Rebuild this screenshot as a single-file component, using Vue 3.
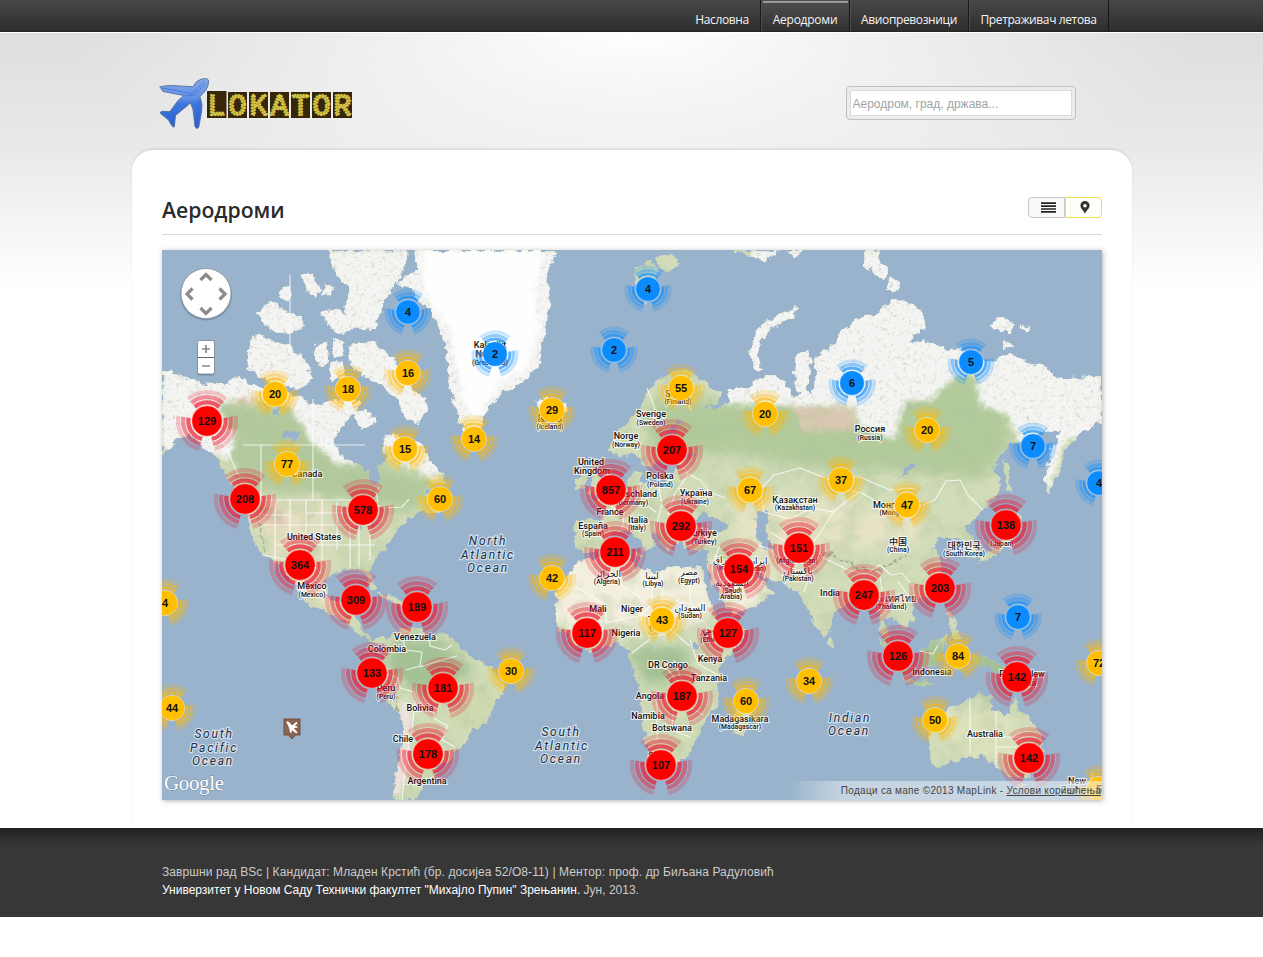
<script setup>
const nav = [
  { text: 'Насловна', cls: 'n1' },
  { text: 'Аеродроми', cls: 'n2 active' },
  { text: 'Авиопревозници', cls: 'n3' },
  { text: 'Претраживач летова', cls: 'n4' },
]
const logo = 'LOKATOR'.split('')

const land = [
  // North America
  'M162 371L180 375 205 384 225 383 240 376 250 384 262 388 285 391 300 399 320 404 345 398 362 402 352 414 340 428 334 443 342 457 356 464 368 470 372 487 379 482 378 466 386 462 382 440 392 433 402 438 414 440 424 446 430 461 442 474 446 484 430 488 424 494 440 498 448 508 438 512 420 512 408 520 397 530 390 543 376 558 370 568 376 586 371 589 364 572 348 569 332 573 325 584 330 601 343 603 348 596 355 599 350 612 356 617 362 630 373 639 385 637 390 643 378 645 362 636 344 621 322 611 305 602 293 584 280 566 270 556 262 554 252 538 248 520 250 505 236 492 226 476 216 459 205 447 190 436 177 437 170 449 162 456Z',
  // Arctic archipelago
  'M328 250L408 250 405 266 396 285 384 300 374 330 352 328 344 305 352 290 336 275Z',
  'M250 338L262 335 275 342 292 346 305 360 313 380 300 388 284 386 262 378 246 368Z',
  'M256 315L268 302 278 303 286 312 301 317 304 328 290 333 272 331Z',
  'M300 275L310 273 321 290 317 297 308 292Z M324 283L334 287 330 298 323 293Z M280 290L290 285 292 297 283 300Z',
  'M315 345L325 340 330 360 322 366 314 358Z M333 340L345 339 342 355 335 358Z M320 314L334 308 348 316 352 330 338 334Z M328 364L340 361 346 377 332 381Z',
  'M347 345L372 342 388 352 402 370 412 388 424 398 428 410 416 424 404 415 398 400 384 386 366 378 352 367Z M353 412L366 410 376 423 362 430Z',
  // Greenland
  'M418 250L558 250 551 265 546 282 550 303 544 340 538 368 520 384 503 392 490 406 483 418 480 434 466 434 459 420 453 398 449 372 446 345 436 318 430 308 417 300 412 288 398 284 406 276 417 272Z',
  'M537 402L548 398 566 402 568 411 553 418 540 414Z M414 250L430 250 426 258 416 262Z',
  // South America
  'M385 640L400 630 418 628 432 635 448 633 458 647 476 660 493 668 500 678 506 686 498 700 492 710 488 722 472 730 466 744 453 754 448 764 438 764 436 776 423 784 417 800 393 800 396 775 401 750 405 733 401 714 388 703 378 690 370 677 374 664 384 655Z',
  'M377 592L393 596 404 603 399 605 384 598Z M406 602L420 604 419 609 406 608Z',
  // British Isles
  'M589 463L598 460 598 474 606 486 602 495 587 494 593 480Z M576 478L586 474 586 488 576 490Z',
  // Eurasia
  'M610 444L618 430 628 423 640 406 650 388 661 377 674 371 687 370 704 380 720 393 719 403 705 406 713 412 728 401 730 388 748 388 757 380 770 374 782 379 793 398 800 395 794 375 796 354 808 350 811 365 807 388 812 396 816 376 814 358 824 350 834 343 847 325 865 315 878 314 892 298 904 302 922 308 926 325 907 343 928 341 948 351 960 346 980 360 993 362 1007 354 1027 362 1045 367 1057 379 1078 377 1102 376 1102 422 1084 430 1068 446 1063 462 1048 494 1045 474 1055 440 1062 430 1043 432 1024 438 1010 444 992 468 1001 480 998 492 985 508 976 519 966 528 975 543 977 557 968 559 961 540 949 538 938 537 934 548 942 562 940 577 926 596 912 602 914 620 903 628 893 617 884 620 889 640 895 651 888 650 880 630 878 605 867 603 850 602 836 611 831 628 823 638 812 620 800 594 784 583 768 580 749 566 743 560 757 577 773 592 756 606 733 615 721 596 707 570 708 551 685 550 682 539 667 550 657 535 650 532 655 545 646 552 640 540 625 531 611 532 600 550 585 553 574 548 575 520 601 520 603 507 593 500 614 494 627 486 633 472 642 472 638 483 658 483 674 476 678 461 696 455 680 449 673 437 682 420 668 429 661 442 660 461 650 468 641 461 632 453 618 456 610 451Z',
  'M1002 458L1010 471 1011 492 1007 488Z M1008 513L1022 516 1010 524Z M1010 528L1009 543 996 556 980 562 982 555 998 546Z',
  'M636 553L645 554 641 558Z M616 543L621 542 621 552 616 551Z M943 588L947 590 944 598Z M828 636L834 640 833 647 828 645Z',
  // Africa
  'M580 560L603 556 630 558 636 567 658 574 670 565 686 568 702 567 707 592 716 617 728 630 748 627 742 642 722 664 717 686 720 705 704 721 698 739 688 755 673 766 655 768 647 746 640 715 643 695 631 667 629 652 617 643 590 651 574 645 556 624 557 588Z',
  'M749 698L754 708 744 734 734 735 731 723 737 710Z',
  // South-east Asia and Australia
  'M878 638L891 649 907 670 904 677 891 662Z M903 677L920 680 934 684 925 687 905 682Z M920 651L935 641 947 634 945 650 936 668 922 664Z M952 655L964 651 958 660 963 672 956 671Z M946 609L951 612 958 630 962 640 952 638 950 622Z',
  'M974 656L992 660 1014 669 1032 690 1018 689 998 679 990 668 976 663Z M1032 675L1042 672 1040 679Z',
  'M927 737L930 726 943 717 950 707 963 703 977 693 990 697 992 710 1010 715 1015 692 1020 710 1030 718 1040 733 1044 750 1030 776 1010 778 997 768 986 758 970 755 953 762 937 768 931 760Z M1016 784L1025 784 1020 791Z M1092 772L1099 786 1093 797 1087 789Z',
  // Arctic islands of Europe and Asia
  'M635 266L652 260 658 272 650 286 646 303 638 293Z M654 257L673 255 680 264 668 274 660 268Z M735 250L780 250 766 261 748 256Z M787 250L802 250 795 259Z',
  'M798 308L786 311 768 320 756 333 750 350 753 368 762 371 758 353 762 338 774 326 794 317Z M776 389L784 390 781 401Z',
  'M865 250L881 250 880 262 890 269 885 281 866 267Z M890 277L901 284 895 292 886 290Z M993 321L1003 317 1015 324 1009 331 994 331Z M1020 325L1031 328 1026 333Z M1004 342L1012 346 1004 348Z',
].join(' ')

const snow = 'M162 250H580V436L464 440 435 480 400 462 385 450 350 465 335 463 310 440 290 406 250 397 215 403 235 435 230 460 210 453 162 450ZM630 250H810V306L784 318 770 378 780 402 720 400 720 388H740L750 250ZM790 250H1102V445L1066 438 1048 494 1020 442 1008 415 980 405 975 368 945 385 928 402 905 400 895 440 858 425 855 406 720 404Z'
const borders = [
  'M214 393V435L225 445 238 475', 'M249 500H352', 'M243 445H365', 'M313 399V500', 'M261 445V500', 'M290 275V350', 'M275 502V570M290 500V560M306 500V572M322 500V560M337 502V550M350 512V568M262 525H370M277 545H375M306 513H350M359 514V567M370 520V560M262 515H290',
  'M352 500L360 507 374 503 382 508 402 507 409 499', 'M262 555L283 559 310 562 322 574', 'M378 502L376 493 379 487',
  'M402 638L406 650 422 652 420 666 406 670M420 667L438 661 457 656M378 671L398 678 400 688 414 692 417 701 432 706 435 719 448 726 442 740 455 747M415 700L412 730 406 760 402 800M429 635L430 646 445 650 452 645',
  'M647 388L654 406 657 428M684 377L681 391 691 410M678 461L688 474 700 480 710 492 725 498M611 506L624 515 622 530M640 482L642 502 656 512M658 483L662 505 655 530M688 475L675 493 668 515',
  'M760 490L774 475 800 468 830 480 840 488 862 493M760 490L764 512 790 519 812 508 833 512 857 493M862 493L882 505 907 511 935 500 946 481 960 480 968 495 983 510M830 480L860 477 890 490 916 488M833 512L824 527 812 544 822 557 848 570 866 574 880 565 891 575 902 573 913 586M770 532L790 544 800 534M784 583L781 561 790 544M820 557L810 575 804 592M730 548L740 562M757 545L770 549 782 562M720 545L714 561M880 577L883 597 892 600M898 582L909 596',
  'M567 640L576 628 590 625 590 607M557 588H578L606 605V623L618 620 637 616M618 558L622 586 641 598M652 572V604L640 616M662 574V598L690 604M690 568V602L703 622M641 617L649 637 671 633M671 605V630L690 646M650 639L632 653M690 640L698 664 718 675M651 664L668 670 684 688 688 703M642 697L674 699 672 730 690 737M657 699V740M684 704L704 715M674 660L681 679M592 630V647M603 625V648',
  'M970 697V754M996 711V768M970 737H1036M997 747H1034M920 651L933 654 938 645',
]

// kind: r = large, y = medium, b = small
const clusters = `408,312,4,b 495,354,2,b 648,289,4,b 614,350,2,b 852,383,6,b 971,362,5,b 1033,446,7,b 1099,483,4,b 1018,617,7,b
275,394,20,y 348,389,18,y 408,373,16,y 405,449,15,y 474,439,14,y 552,410,29,y 681,388,55,y 765,414,20,y 927,430,20,y 287,464,77,y 440,499,60,y 750,490,67,y 841,480,37,y 907,505,47,y 552,578,42,y 662,620,43,y 511,671,30,y 809,681,34,y 958,656,84,y 935,720,50,y 746,701,60,y 165,603,4,y 172,708,44,y 1099,663,72,y 1099,789,5,y
207,421,129,r 245,499,208,r 363,510,578,r 300,565,364,r 356,600,309,r 417,607,189,r 372,673,133,r 443,688,181,r 428,754,178,r 672,450,207,r 611,490,857,r 681,526,292,r 615,552,211,r 739,569,154,r 799,548,151,r 587,633,117,r 728,633,127,r 682,696,187,r 661,765,107,r 864,595,247,r 940,588,203,r 898,656,126,r 1017,677,142,r 1029,758,142,r 1006,525,138,r`
  .split(/\s+/).map(s => { const [x, y, n, k] = s.split(','); return { x: +x, y: +y, n, k } })

const spec = {
  r: { c: '#ff0000', ring: '#ee1028', r: 15.2, w: 4.2, rs: [18.7, 23.9, 29] },
  y: { c: '#ffbf00', ring: '#ffb800', r: 12.7, w: 3, rs: [15.2, 18.9, 22.4] },
  b: { c: '#0a8cff', ring: '#0a8cff', r: 12.3, w: 3, rs: [15, 18.6, 22] },
}
const pt = (r, d) => `${(r * Math.cos(d * Math.PI / 180)).toFixed(2)} ${(r * Math.sin(d * Math.PI / 180)).toFixed(2)}`
const arc = (r, a, b) => `M${pt(r, a)}A${r} ${r} 0 0 1 ${pt(r, b)}`
const rings = r => arc(r, -131, -49) + arc(r, -10, 75) + arc(r, 105, 190)

const labels = [
  ['Kalaallit', 490, 348], ['Nunaat', 490, 357], ['(Greenland)', 490, 365, 1],
  ['Canada', 307, 477], ['United States', 314, 540], ['México', 312, 589], ['(Mexico)', 312, 597, 1],
  ['Venezuela', 415, 640], ['Colombia', 387, 652], ['Perú', 386, 691], ['(Peru)', 386, 699, 1], ['Bolivia', 420, 711], ['Chile', 403, 742], ['Argentina', 427, 784],
  ['Ísland', 550, 422], ['(Iceland)', 550, 429, 1], ['Suomi', 678, 397], ['(Finland)', 678, 404, 1], ['Sverige', 651, 417], ['(Sweden)', 651, 425, 1], ['Norge', 626, 439], ['(Norway)', 626, 447, 1],
  ['United', 591, 465], ['Kingdom', 592, 474], ['Polska', 660, 479], ['(Poland)', 660, 487, 1], ['Deutschland', 632, 497], ['(Germany)', 632, 505, 1], ['Україна', 696, 496], ['(Ukraine)', 695, 504, 1], ['France', 610, 515], ['España', 593, 529], ['(Spain)', 593, 536, 1], ['Italia', 638, 523], ['(Italy)', 637, 530, 1], ['Türkiye', 702, 536], ['(Turkey)', 704, 544, 1],
  ['Россия', 870, 432], ['(Russia)', 870, 440, 1], ['Қазақстан', 795, 503], ['(Kazakhstan)', 795, 510, 1], ['Монгол', 889, 508], ['(Mongolia)', 896, 515, 1], ['中国', 898, 545], ['(China)', 898, 552, 1], ['대한민국', 964, 549], ['(South Korea)', 964, 556, 1], ['(Japan)', 1002, 546, 1], ['India', 830, 596], ['ประเทศไทย', 892, 602], ['(Thailand)', 891, 609, 1], ['(Afghanistan)', 797, 563, 1], ['پاکستان', 798, 574], ['(Pakistan)', 798, 581, 1], ['Indonesia', 932, 675], ['Papua New', 1022, 677], ['Guinea', 1022, 686], ['Australia', 985, 737], ['New', 1077, 784], ['Zealand', 1077, 793],
  ['الجزائر', 608, 577], ['(Algeria)', 607, 584, 1], ['ليبيا', 652, 579], ['(Libya)', 653, 586, 1], ['مصر', 689, 575], ['(Egypt)', 689, 583, 1], ['ایران', 758, 564], ['(Iran)', 758, 571, 1], ['العراق', 725, 563], ['(Iraq)', 725, 570, 1], ['السعودية', 732, 586], ['(Saudi', 732, 593, 1], ['Arabia)', 731, 599, 1],
  ['Mali', 598, 612], ['Niger', 632, 612], ['Tchad', 660, 623], ['(Chad)', 660, 630, 1], ['السودان', 690, 611], ['(Sudan)', 690, 618, 1], ['Nigeria', 626, 636], ['ኢትዮጵያ', 715, 635], ['(Ethiopia)', 715, 642, 1], ['Kenya', 710, 662], ['DR Congo', 668, 668], ['Tanzania', 709, 681], ['Angola', 650, 699], ['Namibia', 648, 719], ['Botswana', 672, 731], ['South', 660, 759], ['Madagasikara', 740, 722], ['(Madagascar)', 740, 729, 1],
]
const oceans = [
  ['North', 488, 545], ['Atlantic', 488, 559], ['Ocean', 488, 572],
  ['South', 561, 736], ['Atlantic', 562, 750], ['Ocean', 561, 763],
  ['South', 214, 738], ['Pacific', 214, 752], ['Ocean', 213, 765],
  ['Indian', 850, 722], ['Ocean', 849, 735],
]
</script>

<template>
  <div class="page">
    <header class="topbar">
      <nav class="nav">
        <a v-for="n in nav" :key="n.text" :class="n.cls"><span>{{ n.text }}</span></a>
      </nav>
    </header>

    <div class="backdrop">
      <div class="head">
        <svg class="logo" width="194" height="53" viewBox="0 0 194 53">
          <defs>
            <linearGradient id="pg" x1="0" y1="0" x2="0" y2="1"><stop offset="0" stop-color="#86a9ea" /><stop offset=".4" stop-color="#5f8fe3" /><stop offset=".5" stop-color="#3f76dc" /><stop offset="1" stop-color="#2a5fd2" /></linearGradient>
          </defs>
          <path d="M.8 8.700Q10 6.500 21 8L34 8.700Q37 2.500 42 1.200 48 -.2 49.500 2 50 7 47 12L41 18.700Q44 26 42.700 33L39.800 49Q38 52 36 48.700L34 31.500 31.500 25 16.500 37.500 15.300 49Q13.500 50 9.500 42L1.500 35.500Q1 33.500 3 33.300L11 33.500 19 22.500 25 17.500 4 13.500Z" fill="url(#pg)" stroke="#58719f" stroke-width=".9" />
          <path d="M3 10L33 15.500 46 3M26 18L35 17 46 6M40 20Q41 34 37 48M13 34L15 45" fill="none" stroke="#2d63cf" stroke-width="1" opacity=".55" />
          <g v-for="(l, i) in logo" :key="i">
            <rect :x="i ? 48 + 21 * i : 48" :y="i ? 14 : 13" :width="i ? 19 : 19.500" :height="i ? 26 : 27" fill="#38260b" />
            <text class="led" :x="57.500 + 21 * i" y="37">{{ l }}</text>
          </g>
        </svg>
        <div class="search"><input type="text" placeholder="Аеродром, град, држава..." /></div>
      </div>

      <main class="card">
        <div class="titlebar">
          <h1>Аеродроми</h1>
          <div class="toggle">
            <button class="list"><svg width="15" height="11" viewBox="0 0 15 11"><path d="M0 1.200H15M0 4.100H15M0 7H15M0 9.800H15" stroke="#222" stroke-width="1.700" /></svg></button>
            <button class="pin"><svg width="10" height="13" viewBox="0 0 10 13"><path fill-rule="evenodd" d="M5 0A4.600 4.600 0 0 0 .4 4.600C.4 7.500 3.400 9.300 5 12.800 6.600 9.300 9.600 7.500 9.600 4.600A4.600 4.600 0 0 0 5 0ZM5 2.900A1.800 1.800 0 1 1 5 6.500 1.800 1.800 0 0 1 5 2.900Z" fill="#333" /></svg></button>
          </div>
        </div>

        <div class="map">
          <svg width="940" height="550" viewBox="162 250 940 550">
            <defs>
              <clipPath id="landclip"><path :d="land" /></clipPath>
              <filter id="rough" filterUnits="userSpaceOnUse" x="150" y="240" width="970" height="570">
                <feTurbulence type="fractalNoise" baseFrequency=".13" numOctaves="3" seed="4" result="n" />
                <feDisplacementMap in="SourceGraphic" in2="n" scale="9" xChannelSelector="R" yChannelSelector="G" />
              </filter>
              <filter id="relief" filterUnits="userSpaceOnUse" x="150" y="240" width="970" height="570">
                <feTurbulence type="fractalNoise" baseFrequency=".05" numOctaves="4" seed="9" />
                <feColorMatrix values="0 0 0 0 .42  0 0 0 0 .56  0 0 0 0 .33  2.6 0 0 0 -1.15" />
              </filter>
              <filter id="speck" filterUnits="userSpaceOnUse" x="150" y="240" width="970" height="570">
                <feTurbulence type="fractalNoise" baseFrequency=".3" numOctaves="2" seed="3" />
                <feColorMatrix values="0 0 0 0 .5  0 0 0 0 .5  0 0 0 0 .45  0 4 0 0 -2.2" />
              </filter>
              <filter id="soft"><feGaussianBlur stdDeviation="6" /></filter>
              <filter id="soft2"><feGaussianBlur stdDeviation="2.5" /></filter>
              <linearGradient id="fade"><stop offset="0" stop-color="#fff" stop-opacity="0" /><stop offset=".17" stop-color="#f3f5f7" stop-opacity=".5" /><stop offset="1" stop-color="#f3f5f7" stop-opacity=".55" /></linearGradient>
              <clipPath id="snowclip"><path :d="snow" /></clipPath>
            </defs>

            <rect x="162" y="250" width="940" height="550" fill="#99b3cc" />
            <g filter="url(#rough)">
              <g clip-path="url(#landclip)">
                <rect x="150" y="240" width="970" height="570" fill="#d2dcb9" />
                <g filter="url(#soft)">
                  <path d="M200 400L310 410 345 460 440 480 410 515 330 495 250 490 225 455Z" fill="#b3c99d" />
                  <path d="M650 400L760 400 900 400 930 375 975 375 1010 410 1010 445 980 480 900 470 830 470 740 455 650 455Z" fill="#b3ca9b" />
                  <path d="M250 505L330 500 320 575 345 615 300 605Z" fill="#e4dfbf" />
                  <path d="M550 555L700 560 720 620 660 632 550 630ZM700 560L780 585 735 620Z" fill="#f3eedd" />
                  <path d="M730 490L830 500 930 515 915 545 835 550 770 580 735 550Z" fill="#e5e3c4" />
                  <path d="M930 710L1010 710 1025 755 960 760Z" fill="#dde2bd" />
                  <path d="M390 640L440 640 475 670 450 695 410 690 385 665ZM630 647L690 647 685 680 645 685ZM885 630L1040 660 1020 700 880 680Z" fill="#a3c195" />
                  <path d="M450 675L500 690 480 725 450 730Z" fill="#cfd9af" />
                </g>
                <g filter="url(#soft2)">
                  <path d="M225 385L250 385 262 397 242 406 227 399Z M260 510L280 505 288 528 268 525Z" fill="#dfc8ae" />
                  <path d="M790 404L855 407 855 430 805 431ZM1017 382L1070 385 1080 394 1055 403 1015 395ZM1040 425L1060 418 1065 428Z" fill="#dcc8b2" />
                </g>
                <rect x="150" y="240" width="970" height="570" filter="url(#relief)" opacity=".45" />
                <path :d="snow" fill="#f4f5f2" filter="url(#soft2)" />
                <g clip-path="url(#snowclip)"><rect x="150" y="240" width="970" height="570" filter="url(#speck)" opacity=".42" /></g>
                <path d="M422 250H543L535 300 540 330 525 370 500 383 475 420 463 400 450 330 425 295Z" fill="#fefefe" filter="url(#soft2)" />
                <path d="M400 700L412 703 408 770 398 800 390 780Z" fill="#eee1dc" filter="url(#soft2)" />
                <path d="M800 560L830 553 870 573 910 555M235 475L255 510 265 550M380 670L395 695 405 740" fill="none" stroke="#86906f" stroke-width="2" stroke-dasharray="4 2" opacity=".6" />
              </g>
              <path d="M692 522L704 512 713 518 728 524 727 531 706 531ZM755 514L767 510 768 522 764 529 772 548 765 550 758 537ZM350 518L362 516 370 520 363 521 360 531 356 522ZM370 526L380 522 372 528ZM283 431L300 432 295 440 283 438ZM270 410L282 408 279 416ZM692 641L699 645 694 650ZM899 480L913 468 915 462 909 463ZM668 426L683 420 680 425 670 434Z" fill="#99b3cc" />
            </g>
            <path v-for="(b, i) in borders" :key="'b' + i" :d="b" fill="none" stroke="#fff" stroke-width="1.15" stroke-linejoin="round" opacity=".76" />

            <g class="lbl">
              <text v-for="(l, i) in labels" :key="'l' + i" :x="l[1]" :y="l[2]" :class="{ sub: l[3] }">{{ l[0] }}</text>
            </g>
            <g class="ocean">
              <text v-for="(o, i) in oceans" :key="'o' + i" :x="o[1]" :y="o[2]">{{ o[0] }}</text>
            </g>

            <g v-for="(c, i) in clusters" :key="'c' + i" :transform="`translate(${c.x} ${c.y})`">
              <path v-for="(r, j) in spec[c.k].rs" :key="j" :d="rings(r)" fill="none" :stroke="spec[c.k].ring" :stroke-width="spec[c.k].w" :opacity="[0.68, 0.45, 0.22][j]" />
              <circle :r="spec[c.k].r" :fill="spec[c.k].c" stroke="#fff" stroke-opacity=".4" stroke-width="1" />
              <text class="num" y="4">{{ c.n }}</text>
            </g>

            <g>
              <path d="M284 719H300V735H295.500L292 739 288.500 735H284Z" fill="#8a6552" stroke="#705041" />
              <path d="M286.500 721.500L289 722 292 725.500 296.500 726 298 727.500 293.800 728 297.500 732.500 296.300 733.500 291.800 730 291.500 733 290 732.500 289.300 728.500Z" fill="#fff" />
              <path d="M287 722L292 727 297 722.500" fill="none" stroke="#fff" stroke-width="1.800" />
            </g>

            <g class="ctl">
              <circle cx="206" cy="294.500" r="26" fill="#456" opacity=".35" />
              <circle cx="206" cy="293.500" r="25" fill="#fff" stroke="#858f99" stroke-width=".7" />
              <path d="M200.500 280L206 274.500 211.500 280M200.500 308L206 313.500 211.500 308M192.500 288.500L187 294 192.500 299.500M219.500 288.500L225 294 219.500 299.500" fill="none" stroke="#8b8b8b" stroke-width="3.200" />
              <rect x="197.500" y="341.500" width="17" height="34" rx="2" fill="#456" opacity=".4" />
              <rect x="197.500" y="340.500" width="17" height="33.500" rx="2" fill="#fff" stroke="#77838f" stroke-width=".8" />
              <path d="M198 357.500H214" stroke="#5b6570" />
              <path d="M202 349H210M206 345V353M202 366H210" stroke="#888" stroke-width="1.700" />
            </g>
            <rect x="790" y="781" width="312" height="19" fill="url(#fade)" />
            <text class="google" x="164" y="790" textLength="60">Google</text>
          </svg>
          <div class="copy">Подаци са мапе ©2013 MapLink - <u>Услови коришћења</u></div>
        </div>
      </main>
    </div>

    <footer>
      <p class="f1">Завршни рад BSc | Кандидат: Младен Крстић (бр. досијеа 52/О8-11) | Ментор: проф. др Биљана Радуловић</p>
      <p class="f2"><strong>Универзитет у Новом Саду Технички факултет "Михајло Пупин" Зрењанин.</strong> Јун, 2013.</p>
    </footer>
  </div>
</template>

<style>
body { margin: 0; background: #fff; }
</style>

<style scoped>
.page { width: 1263px; height: 957px; overflow: hidden; background: #fff; font-family: "Liberation Sans", Arial, sans-serif; }
.topbar { height: 32px; background: linear-gradient(#484848, #2d2d2d); box-sizing: border-box; border-bottom: 1px solid #242424; }
.nav { display: flex; margin-left: 683px; height: 31px; width: 426px; border-right: 1px solid #171717; box-sizing: border-box; }
.nav a { box-sizing: border-box; display: flex; justify-content: center; padding-top: 11px; color: #f4f4f4; font: 500 12px/18px "Open Sans", "Noto Sans", sans-serif; white-space: nowrap; border-left: 1px solid #171717; box-shadow: inset 1px 0 #515151; letter-spacing: -.38px; }
.nav .n1 { width: 77px; border-left-color: transparent; box-shadow: none; }
.nav .n2 { width: 89px; letter-spacing: -.25px; }
.nav .n3 { width: 119px; }
.nav .n4 { width: 140px; }
.nav .active { background: linear-gradient(#aaa, #8a8a8a) 2px 1px / 85px 2px no-repeat, linear-gradient(#505050, #303030); }
.backdrop { height: 796px; background: linear-gradient(rgba(255,255,255,0), rgba(255,255,255,.35) 118px, #fff 255px), radial-gradient(ellipse 560px 190px at 632px 0, #fff 0, #f1f1f1 40%, #dedede 100%); border-top: 1px solid #fff; box-sizing: border-box; }
.head { height: 117px; margin: 0 auto; width: 1000px; display: flex; justify-content: space-between; box-sizing: border-box; padding: 45px 56px 0 27px; }
.logo { display: block; }
.led { font: 30px "Liberation Mono", monospace; text-anchor: middle; fill: #b9a42b; stroke: #d6c74b; stroke-width: 2.3px; stroke-linecap: round; stroke-dasharray: 0 2.9; }
.search { width: 230px; height: 34px; margin-top: 8px; padding: 3px; box-sizing: border-box; border: 1px solid #bfbfbf; border-radius: 4px; background: #ececec; }
.search input { display: block; width: 222px; height: 26px; margin: 0; border: 1px solid #dcdcdc; padding: 1px 2px 0; background: #fff; font: 12px "Liberation Sans", Arial, sans-serif; box-sizing: border-box; }
.search input::placeholder { color: #a0a5a3; opacity: 1; }
.card { width: 1000px; height: 678px; margin: 0 auto; position: relative; left: .5px; border-radius: 21px 21px 0 0; background: #fff; padding: 34px 30px 0; box-sizing: border-box; box-shadow: 0 -110px 0 -110px #fff, 0 -2px 3px -1px rgba(0,0,0,.12); }
.titlebar { height: 51px; border-bottom: 1px solid #dadada; box-sizing: border-box; display: flex; justify-content: space-between; }
h1 { margin: 9px 0 0; font: 600 21.2px/34px "Open Sans", "Noto Sans", sans-serif; color: #2b2b2b; }
.toggle { display: flex; margin-top: 13px; height: 21px; }
.toggle button { display: flex; align-items: center; justify-content: center; margin: 0; padding: 0 0 0 4px; width: 37px; height: 21px; border: 1px solid #c8c8c8; border-radius: 4px 0 0 4px; background: #f9f9f9; }
.toggle .pin { border-color: #f2dc50; border-radius: 0 4px 4px 0; background: #fffffa; padding-left: 2px; }
.map { position: relative; width: 940px; height: 550px; margin-top: 15px; box-shadow: 1px 1px 5px rgba(0,0,0,.3); overflow: visible; }
.map svg { display: block; }
.lbl text { font: 500 9px Roboto, "Noto Sans", "Noto Sans CJK SC", "Noto Sans CJK KR", "DejaVu Sans", sans-serif; text-anchor: middle; fill: #111; stroke: rgba(255,255,255,.75); stroke-width: 2.2px; paint-order: stroke; }
.lbl .sub { font-size: 6.8px; }
.ocean text { font: italic 12px Roboto, sans-serif; letter-spacing: 1.8px; text-anchor: middle; fill: #223047; stroke: rgba(222,231,240,.85); stroke-width: 2.5px; paint-order: stroke; }
.num { font: bold 11px "Liberation Sans", Arial, sans-serif; text-anchor: middle; fill: #111; }
.google { font: 21px "Liberation Serif", serif; fill: #fff; stroke: rgba(80,100,125,.55); stroke-width: 1px; paint-order: stroke; }
.copy { position: absolute; right: 1px; bottom: 3px; font-size: 10px; line-height: 13px; letter-spacing: .29px; color: #444; white-space: nowrap; }
footer { height: 89px; box-sizing: border-box; background: linear-gradient(#222, #373737 18px); padding: 35px 0 0 162px; font-size: 12px; line-height: 18px; color: #ccc; }
footer p { margin: 0; white-space: nowrap; }
.f1 { letter-spacing: .1px; }
footer strong { font-weight: normal; color: #fff; }
</style>
